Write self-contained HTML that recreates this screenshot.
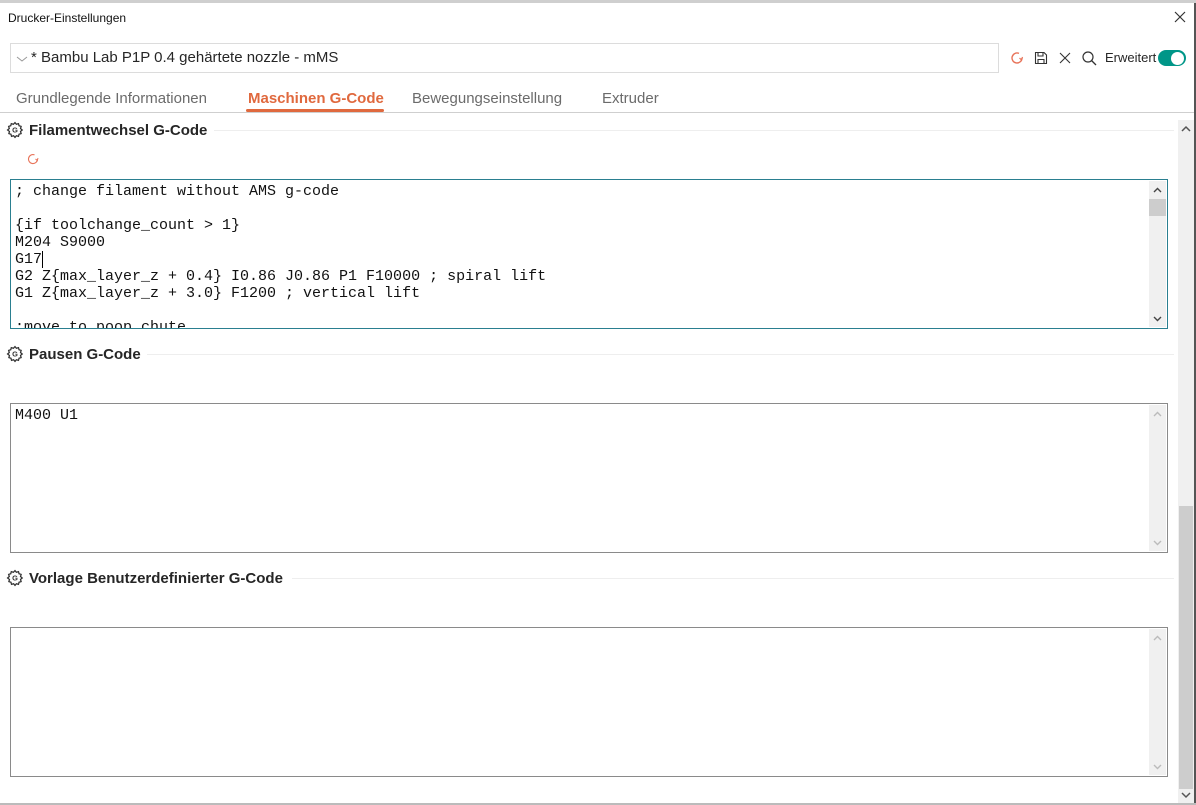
<!DOCTYPE html>
<html><head><meta charset="utf-8"><style>
*{box-sizing:border-box;margin:0;padding:0}
body{width:1196px;height:805px;background:#fff;position:relative;overflow:hidden;font-family:"Liberation Sans",sans-serif;color:#222}
.abs{position:absolute}
.tab{position:absolute;top:90px;font-size:15px;color:#6b6b6b}
.hdr{position:absolute;left:6px;font-size:15px;font-weight:bold;color:#262626;display:flex;align-items:center;gap:5px}
.hline{position:absolute;height:1px;background:#eeeeee;right:22px}
.ta{position:absolute;left:10px;width:1158px;height:150px;border:1px solid #8a8a8a;background:#fff;overflow:hidden}
.code{position:absolute;left:4px;top:2px;font-family:"Liberation Mono",monospace;font-size:15px;line-height:17px;white-space:pre;color:#111}
.isb{position:absolute;right:1px;top:1px;bottom:1px;width:17px;background:#f0f0f0}
</style></head><body>
<div class="abs" style="left:0;top:0;width:1196px;height:3px;background:#cfcfcf"></div>
<div class="abs" style="left:1194px;top:3px;width:2px;height:802px;background:#555"></div>
<div class="abs" style="left:8px;top:11px;font-size:12px;color:#111">Drucker-Einstellungen</div>
<svg class="abs" style="left:1173px;top:10px" width="14" height="14" viewBox="0 0 14 14"><path d="M2 2L12 12M12 2L2 12" stroke="#333" stroke-width="1.2"/></svg>

<div class="abs" style="left:10px;top:43px;width:989px;height:30px;border:1px solid #dcdcdc"></div>
<svg class="abs" style="left:16px;top:55px" width="12" height="8" viewBox="0 0 12 8"><path d="M1 2L6 6L11 2" stroke="#999" fill="none" stroke-width="1"/></svg>
<div class="abs" style="left:31px;top:49px;font-size:15px;color:#262626">* Bambu Lab P1P 0.4 gehärtete nozzle - mMS</div>

<svg class="abs" style="left:1009px;top:50px" width="16" height="16" viewBox="0 0 16 16"><path d="M13 8A5 5 0 1 1 10 3.4" stroke="#e8745a" fill="none" stroke-width="1.4"/><path d="M13.5 7L12.5 10L10.5 8" stroke="#e8745a" fill="none" stroke-width="1.2"/></svg>
<svg class="abs" style="left:1034px;top:51px" width="14" height="14" viewBox="0 0 14 14"><path d="M1.5 1.5H10L12.5 4V12.5H1.5Z M4 1.5V5H9V1.5 M4 12.5V8.5H10V12.5" stroke="#333" fill="none" stroke-width="1.1"/></svg>
<svg class="abs" style="left:1059px;top:52px" width="12" height="12" viewBox="0 0 12 12"><path d="M1 1L11 11M11 1L1 11" stroke="#333" stroke-width="1.1"/></svg>
<svg class="abs" style="left:1081px;top:50px" width="17" height="17" viewBox="0 0 17 17"><circle cx="7" cy="7" r="5" stroke="#333" fill="none" stroke-width="1.2"/><path d="M10.5 10.5L15 15" stroke="#333" stroke-width="1.3"/></svg>
<div class="abs" style="left:1105px;top:50px;font-size:13px;color:#262626">Erweitert</div>
<div class="abs" style="left:1158px;top:50px;width:28px;height:16px;border-radius:8px;background:#009688"></div>
<div class="abs" style="left:1171px;top:51.5px;width:13px;height:13px;border-radius:50%;background:#fff"></div>

<div class="tab" style="left:16px">Grundlegende Informationen</div>
<div class="tab" style="left:248px;color:#e0693e;font-weight:bold">Maschinen G-Code</div>
<div class="abs" style="left:246px;top:109px;width:138px;height:3px;background:#e0693e;border-radius:2px"></div>
<div class="tab" style="left:412px">Bewegungseinstellung</div>
<div class="tab" style="left:602px">Extruder</div>
<div class="abs" style="left:0;top:112px;width:1194px;height:1px;background:#cfcfcf"></div>

<!-- outer scrollbar -->
<div class="abs" style="left:1178px;top:120px;width:16px;height:683px;background:#f0f0f0"></div>
<div class="abs" style="left:1179px;top:506px;width:14px;height:283px;background:#cdcdcd"></div>
<svg class="abs" style="left:1181px;top:125px" width="10" height="7" viewBox="0 0 10 7"><path d="M1 6L5 2L9 6" stroke="#555" fill="none" stroke-width="1.5"/></svg>
<svg class="abs" style="left:1181px;top:792px" width="10" height="7" viewBox="0 0 10 7"><path d="M1 1L5 5L9 1" stroke="#555" fill="none" stroke-width="1.5"/></svg>

<!-- section 1 -->
<div class="hdr" style="top:121px"><svg width="18" height="18" viewBox="0 0 17 17"><path d="M8.5 1.5l1.3 1.6 2-.6.5 2 2 .6-.6 2 1.6 1.4-1.6 1.4.6 2-2 .6-.5 2-2-.6-1.3 1.6-1.3-1.6-2 .6-.5-2-2-.6.6-2L1.5 8.5l1.6-1.4-.6-2 2-.6.5-2 2 .6z" stroke="#333" fill="none" stroke-width="1.2"/><text x="8.5" y="11" font-size="7" text-anchor="middle" font-family="Liberation Sans" font-weight="bold" fill="#333">G</text></svg>Filamentwechsel G-Code</div>
<div class="hline" style="left:214px;top:130px"></div>
<svg class="abs" style="left:26px;top:152px" width="14" height="14" viewBox="0 0 14 14"><path d="M11.5 7A4.5 4.5 0 1 1 8.5 2.8" stroke="#e8745a" fill="none" stroke-width="1.1"/><path d="M12 6L11.3 8.5L9.5 7" stroke="#e8745a" fill="none" stroke-width="1"/></svg>
<div class="ta" style="top:179px;border-color:#2a7f90">
<div class="code" style="top:3px">; change filament without AMS g-code

{if toolchange_count &gt; 1}
M204 S9000
G17<span style="border-left:1px solid #000"></span>
G2 Z{max_layer_z + 0.4} I0.86 J0.86 P1 F10000 ; spiral lift
G1 Z{max_layer_z + 3.0} F1200 ; vertical lift

;move to poop chute</div>
<div class="isb"><svg style="position:absolute;left:4px;top:6px" width="9" height="6" viewBox="0 0 9 6"><path d="M1 5L4.5 1.5L8 5" stroke="#444" fill="none" stroke-width="1.4"/></svg><div style="position:absolute;left:0;top:18px;width:17px;height:17px;background:#cdcdcd"></div><svg style="position:absolute;left:4px;bottom:5px" width="9" height="6" viewBox="0 0 9 6"><path d="M1 1L4.5 4.5L8 1" stroke="#444" fill="none" stroke-width="1.4"/></svg></div>
</div>

<!-- section 2 -->
<div class="hdr" style="top:345px"><svg width="18" height="18" viewBox="0 0 17 17"><path d="M8.5 1.5l1.3 1.6 2-.6.5 2 2 .6-.6 2 1.6 1.4-1.6 1.4.6 2-2 .6-.5 2-2-.6-1.3 1.6-1.3-1.6-2 .6-.5-2-2-.6.6-2L1.5 8.5l1.6-1.4-.6-2 2-.6.5-2 2 .6z" stroke="#333" fill="none" stroke-width="1.2"/><text x="8.5" y="11" font-size="7" text-anchor="middle" font-family="Liberation Sans" font-weight="bold" fill="#333">G</text></svg>Pausen G-Code</div>
<div class="hline" style="left:147px;top:354px"></div>
<div class="ta" style="top:403px">
<div class="code" style="top:3px">M400 U1</div>
<div class="isb"><svg style="position:absolute;left:4px;top:6px" width="9" height="6" viewBox="0 0 9 6"><path d="M1 5L4.5 1.5L8 5" stroke="#bbb" fill="none" stroke-width="1.4"/></svg><svg style="position:absolute;left:4px;bottom:5px" width="9" height="6" viewBox="0 0 9 6"><path d="M1 1L4.5 4.5L8 1" stroke="#bbb" fill="none" stroke-width="1.4"/></svg></div>
</div>

<!-- section 3 -->
<div class="hdr" style="top:569px"><svg width="18" height="18" viewBox="0 0 17 17"><path d="M8.5 1.5l1.3 1.6 2-.6.5 2 2 .6-.6 2 1.6 1.4-1.6 1.4.6 2-2 .6-.5 2-2-.6-1.3 1.6-1.3-1.6-2 .6-.5-2-2-.6.6-2L1.5 8.5l1.6-1.4-.6-2 2-.6.5-2 2 .6z" stroke="#333" fill="none" stroke-width="1.2"/><text x="8.5" y="11" font-size="7" text-anchor="middle" font-family="Liberation Sans" font-weight="bold" fill="#333">G</text></svg>Vorlage Benutzerdefinierter G-Code</div>
<div class="hline" style="left:292px;top:578px"></div>
<div class="ta" style="top:627px">
<div class="isb"><svg style="position:absolute;left:4px;top:6px" width="9" height="6" viewBox="0 0 9 6"><path d="M1 5L4.5 1.5L8 5" stroke="#bbb" fill="none" stroke-width="1.4"/></svg><svg style="position:absolute;left:4px;bottom:5px" width="9" height="6" viewBox="0 0 9 6"><path d="M1 1L4.5 4.5L8 1" stroke="#bbb" fill="none" stroke-width="1.4"/></svg></div>
</div>
<div class="abs" style="left:0;top:803px;width:1196px;height:2px;background:#bbb"></div>
</body></html>
